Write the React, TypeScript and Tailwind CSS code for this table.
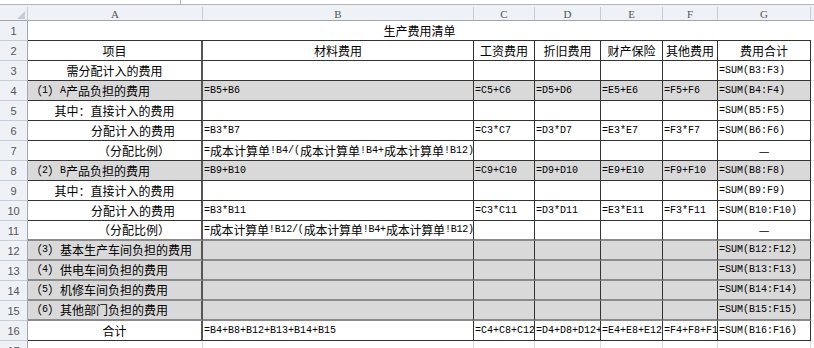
import React from "react";

type Row = {
  n: number;
  a: string;
  pos: "c" | "l" | "i1" | "i2";
  cells: string[];
  fill?: boolean;
};

const cols = ["A", "B", "C", "D", "E", "F", "G"];

const rows: Row[] = [
  { n: 2, a: "项目", pos: "c", cells: ["材料费用", "工资费用", "折旧费用", "财产保险", "其他费用", "费用合计"] },
  { n: 3, a: "需分配计入的费用", pos: "c", cells: ["", "", "", "", "", "=SUM(B3:F3)"] },
  { n: 4, a: "（1）A产品负担的费用", pos: "l", fill: true, cells: ["=B5+B6", "=C5+C6", "=D5+D6", "=E5+E6", "=F5+F6", "=SUM(B4:F4)"] },
  { n: 5, a: "其中：直接计入的费用", pos: "c", cells: ["", "", "", "", "", "=SUM(B5:F5)"] },
  { n: 6, a: "分配计入的费用", pos: "i1", cells: ["=B3*B7", "=C3*C7", "=D3*D7", "=E3*E7", "=F3*F7", "=SUM(B6:F6)"] },
  { n: 7, a: "（分配比例）", pos: "i2", cells: ["=成本计算单!B4/(成本计算单!B4+成本计算单!B12)", "", "", "", "", "—"] },
  { n: 8, a: "（2）B产品负担的费用", pos: "l", fill: true, cells: ["=B9+B10", "=C9+C10", "=D9+D10", "=E9+E10", "=F9+F10", "=SUM(B8:F8)"] },
  { n: 9, a: "其中：直接计入的费用", pos: "c", cells: ["", "", "", "", "", "=SUM(B9:F9)"] },
  { n: 10, a: "分配计入的费用", pos: "i1", cells: ["=B3*B11", "=C3*C11", "=D3*D11", "=E3*E11", "=F3*F11", "=SUM(B10:F10)"] },
  { n: 11, a: "（分配比例）", pos: "i2", cells: ["=成本计算单!B12/(成本计算单!B4+成本计算单!B12)", "", "", "", "", "—"] },
  { n: 12, a: "（3）基本生产车间负担的费用", pos: "l", fill: true, cells: ["", "", "", "", "", "=SUM(B12:F12)"] },
  { n: 13, a: "（4）供电车间负担的费用", pos: "l", fill: true, cells: ["", "", "", "", "", "=SUM(B13:F13)"] },
  { n: 14, a: "（5）机修车间负担的费用", pos: "l", fill: true, cells: ["", "", "", "", "", "=SUM(B14:F14)"] },
  { n: 15, a: "（6）其他部门负担的费用", pos: "l", fill: true, cells: ["", "", "", "", "", "=SUM(B15:F15)"] },
  {
    n: 16,
    a: "合计",
    pos: "c",
    cells: [
      "=B4+B8+B12+B13+B14+B15",
      "=C4+C8+C12+C13+C14+C15",
      "=D4+D8+D12+D13+D14+D15",
      "=E4+E8+E12+E13+E14+E15",
      "=F4+F8+F12+F13+F14+F15",
      "=SUM(B16:F16)",
    ],
  },
];

// ASCII runs get the narrow mono face, CJK runs the wide one (like SimSun)
function Txt({ s }: { s: string }) {
  const parts = s.match(/[\x20-\x7e]+|[^\x20-\x7e]+/g) ?? [];
  return (
    <>
      {parts.map((p, i) =>
        /^[\x20-\x7e]/.test(p) ? (
          <span key={i} className="font-['Liberation_Mono',monospace] text-[10px]">
            {p}
          </span>
        ) : (
          <span key={i} className="font-['Noto_Sans_CJK_SC',sans-serif] text-[12px]">
            {p}
          </span>
        )
      )}
    </>
  );
}

const grid = "grid grid-cols-[28px_175px_271px_61px_66px_62px_55px_93px_1fr]";
const rowHead =
  "flex items-end justify-center pb-[2px] bg-[#eef1f5] border-b border-b-[#c6ccd5] border-r border-r-[#9ea6b1] font-['Liberation_Sans',sans-serif] text-[11px] leading-[14px] text-[#555]";

function bottomLine(n: number) {
  if (n >= 11 && n <= 15) return "border-b-2 border-b-[#8a8a8a]";
  return "border-b border-b-[#333]";
}

export default function App() {
  return (
    <div className="h-[348px] w-[814px] overflow-hidden bg-white text-black">
      {/* edge of the formula bar */}
      <div className="flex h-[4px]">
        <div className="w-[181px] border-r border-r-[#b5b5b5]" />
      </div>
      <div className="h-[1px] bg-[#b5b5b5]" />
      <div className="h-[2px] bg-[#eef0f3]" />

      {/* column letters */}
      <div className={`${grid} h-[14px]`}>
        <div className="relative bg-[#eef1f5] border-b border-b-[#9ea6b1] border-r border-r-[#c6ccd5]">
          <svg className="absolute left-0 top-0" width="28" height="14">
            <polygon points="25,4 25,12 17,12" fill="#c9cdd3" />
          </svg>
        </div>
        {cols.map((c) => (
          <div
            key={c}
            className="flex items-center justify-center bg-[#eef1f5] border-b border-b-[#9ea6b1] border-r border-r-[#c6ccd5] font-['Liberation_Serif',serif] text-[11px] leading-[12px] text-[#555]"
          >
            {c}
          </div>
        ))}
        <div className="bg-[#eef1f5] border-b border-b-[#9ea6b1]" />
      </div>

      <div className={`${grid} auto-rows-[20px]`}>
        {/* row 1: merged title */}
        <div className={rowHead}>1</div>
        <div className="col-span-7 flex items-center justify-center border-b border-b-[#333] leading-[16px]">
          <Txt s="生产费用清单" />
        </div>
        <div />

        {rows.map((r) => (
          <React.Fragment key={r.n}>
            <div className={rowHead}>{r.n}</div>
            <div
              className={`flex items-center whitespace-nowrap leading-[16px] border-r-2 border-r-[#555] ${bottomLine(r.n)} ${
                r.fill ? "bg-[#d9d9d9]" : ""
              } ${
                r.pos === "c"
                  ? "justify-center"
                  : r.pos === "l"
                  ? "pl-[2px]"
                  : r.pos === "i1"
                  ? "pl-[63px]"
                  : "pl-[70px]"
              }`}
            >
              <Txt s={r.a} />
            </div>
            {r.cells.map((v, i) => {
              const head = r.n === 2;
              const spill = i === 0 && (r.n === 7 || r.n === 11);
              const dash = v === "—";
              return (
                <div
                  key={i}
                  className={`flex whitespace-nowrap leading-[14px] border-r border-r-[#333] ${bottomLine(r.n)} ${
                    r.fill ? "bg-[#d9d9d9]" : ""
                  } ${
                    head
                      ? "items-center justify-center leading-[16px]"
                      : dash
                      ? "items-center justify-center"
                      : "items-end pb-[2px] pl-[1px]"
                  } ${spill ? "relative z-10 overflow-visible" : "overflow-hidden"} ${
                    spill && r.n === 11 ? "tracking-[-0.2px]" : ""
                  }`}
                >
                  {dash ? <span className="text-[12px] font-['Noto_Sans_CJK_SC',sans-serif]">—</span> : <Txt s={v} />}
                </div>
              );
            })}
            <div className="border-b border-b-[#e3e3e3]" />
          </React.Fragment>
        ))}

        {/* row 17, mostly below the window */}
        <div className={rowHead}>17</div>
        {cols.map((c) => (
          <div key={c} className="border-r border-r-[#dadada] border-b border-b-[#dadada]" />
        ))}
        <div />
      </div>
    </div>
  );
}
